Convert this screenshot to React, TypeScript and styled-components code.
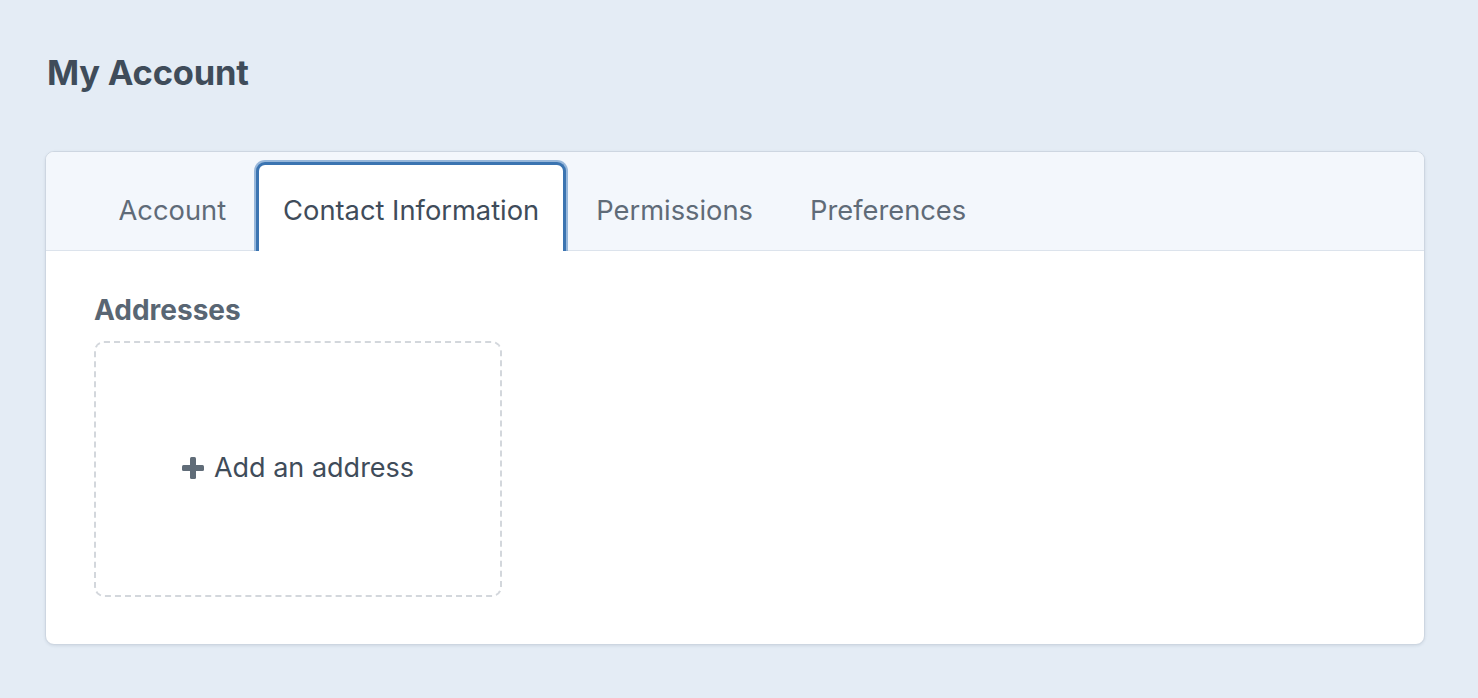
import React from "react";
import styled, { createGlobalStyle } from "styled-components";

const GlobalStyle = createGlobalStyle`
  html, body {
    margin: 0;
    padding: 0;
    background: #e4ecf5;
    font-family: Inter, "Noto Sans", "Liberation Sans", sans-serif;
    -webkit-font-smoothing: antialiased;
  }
  * { box-sizing: border-box; }
`;

const Page = styled.div`
  padding: 52px 53px 40px 45px;
`;

const Title = styled.h1`
  margin: 0 0 57px 2px;
  font-size: 34.5px;
  line-height: 42px;
  font-weight: 700;
  color: #3f4c5a;
  letter-spacing: -0.2px;
`;

const Card = styled.div`
  background: #ffffff;
  border: 1px solid #cdd6e1;
  border-radius: 9px;
  overflow: hidden;
  box-shadow: 0 1px 3px rgba(60, 80, 110, 0.12);
`;

const TabBar = styled.div`
  display: flex;
  align-items: flex-end;
  height: 99px;
  padding: 10px 0 0 44px;
  background: #f3f7fc;
  border-bottom: 1px solid #dce3ec;
`;

const Tab = styled.div<{ $active?: boolean }>`
  display: flex;
  align-items: center;
  height: 89px;
  margin: 0 1.5px -1px;
  padding: 4px 24px 0;
  border: 3px solid ${(p) => (p.$active ? "#3b74b1" : "transparent")};
  border-bottom: 0;
  border-radius: 9px 9px 0 0;
  background: ${(p) => (p.$active ? "#ffffff" : "transparent")};
  box-shadow: ${(p) => (p.$active ? "0 0 0 2px rgba(90, 140, 195, 0.6)" : "none")};
  clip-path: inset(-4px -4px 0 -4px);
  font-size: 27.3px;
  color: ${(p) => (p.$active ? "#3f4c5a" : "#5f6b78")};
  white-space: nowrap;
  cursor: pointer;
`;

const Content = styled.div`
  padding: 42px 48px 47px;
`;

const SectionHeading = styled.h2`
  margin: 0 0 14px;
  font-size: 28px;
  line-height: 34px;
  font-weight: 700;
  color: #596673;
`;

const AddCard = styled.button`
  display: flex;
  align-items: center;
  justify-content: center;
  gap: 10px;
  width: 408px;
  height: 256px;
  padding: 0 0 3px;
  background: transparent;
  border: 2px dashed #d3d7dc;
  border-radius: 10px;
  font-family: inherit;
  font-size: 27px;
  color: #3f4c5a;
  cursor: pointer;
`;

const PlusIcon = () => (
  <svg width="22" height="22" viewBox="0 0 22 22" aria-hidden="true">
    <rect x="8" y="0" width="6" height="22" rx="1.5" fill="#606c78" />
    <rect x="0" y="8" width="22" height="6" rx="1.5" fill="#606c78" />
  </svg>
);

const tabs = ["Account", "Contact Information", "Permissions", "Preferences"];

export default function App() {
  return (
    <>
      <GlobalStyle />
      <Page>
        <Title>My Account</Title>
        <Card>
          <TabBar>
            {tabs.map((t) => (
              <Tab key={t} $active={t === "Contact Information"}>
                {t}
              </Tab>
            ))}
          </TabBar>
          <Content>
            <SectionHeading>Addresses</SectionHeading>
            <AddCard>
              <PlusIcon />
              <span>Add an address</span>
            </AddCard>
          </Content>
        </Card>
      </Page>
    </>
  );
}
